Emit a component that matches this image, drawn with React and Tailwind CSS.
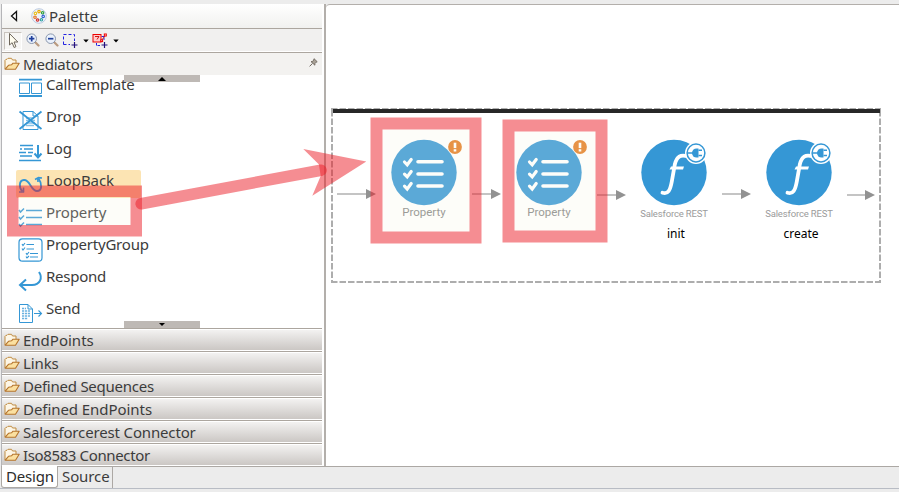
const BLUE = '#3597d5';

function Folder() {
  return (
    <svg width="16" height="14" viewBox="0 0 16 14" className="shrink-0">
      <path d="M1 12V3.3L2 2.3H3L4 1.3H7.5L8.5 3H12V6" fill="#fdf6e6" stroke="#c08d43" />
      <path d="M1.2 12.2L4.5 8.3L7.5 7.8L9 6.2H15.2L11.5 12.2Z" fill="#fbe0a0" stroke="#b5742c" strokeWidth="1.1" strokeLinejoin="round" />
    </svg>
  );
}

function PaletteHeader() {
  const dots = [
    [8, 3.6, '#e8a800'], [4.4, 5.4, '#e8c020'], [4, 9.2, '#e07020'], [6.6, 12, '#d03030'],
    [11.6, 4.8, '#30a040'], [12.2, 8.4, '#3060d0'], [10.4, 11.8, '#30a0a0'],
  ];
  return (
    <div className="flex h-6 w-[320px] items-center bg-linear-to-b from-white to-[#f1f1ef]">
      <svg width="10" height="12" viewBox="0 0 10 12" className="ml-[7px]">
        <path d="M7.5 1.5V10.5L2.5 6Z" fill="#fff" stroke="#111" strokeWidth="1.3" />
      </svg>
      <svg width="16" height="16" viewBox="0 0 16 16" className="ml-[12px] -mt-px">
        <circle cx="8" cy="8" r="7.3" fill="#eef3fb" stroke="#b6c5dc" strokeWidth=".9" />
        {dots.map(([x, y, c]) => (
          <circle key={c} cx={x} cy={y} r="1.2" fill="#fff" stroke={c} strokeWidth="1.2" />
        ))}
      </svg>
      <span className="ml-[2px]">Palette</span>
    </div>
  );
}

function Magnifier({ plus }) {
  return (
    <svg width="14" height="14" viewBox="0 0 14 14">
      <path d="M9 9L12.5 12.5" stroke="#b99a80" strokeWidth="2.2" strokeLinecap="round" />
      <circle cx="5.7" cy="5.7" r="4.8" fill="#eaf1fc" stroke="#8a97ad" />
      <path d={plus ? 'M3 5.7H8.4M5.7 3V8.4' : 'M3 5.7H8.4'} stroke="#1f3f9c" strokeWidth="1.7" />
    </svg>
  );
}

function Caret() {
  return (
    <svg width="6" height="4" viewBox="0 0 6 4">
      <path d="M.3 .5H5.7L3 3.5Z" fill="#000" />
    </svg>
  );
}

function Toolbar() {
  return (
    <div className="flex h-[23px] w-[320px] items-center border-t border-[#aca69f] bg-[#f1f0ef]">
      <div className="ml-[2px] mt-px flex h-[18px] w-[18px] items-center justify-center border border-[#c9c4be] border-r-white border-b-white bg-[#f7f6f4]">
        <svg width="14" height="17" viewBox="0 0 14 17" className="shrink-0">
          <path d="M3.5 1.5V13L6.1 10.7L8.1 15.5L9.9 14.7L8 10H11.8Z" fill="#fffdf0" stroke="#6f675c" />
        </svg>
      </div>
      <div className="ml-[4px] -mt-px"><Magnifier plus /></div>
      <div className="ml-[5px] -mt-px"><Magnifier /></div>
      <svg width="16" height="15" viewBox="0 0 16 15" className="ml-[3px]">
        <path d="M1.5 11.5V1.5H12.5V8M1.5 11.5H8" fill="none" stroke="#2222e0" strokeDasharray="3 2" />
        <path d="M12.5 9V15M9.5 12H15.5" stroke="#22107c" strokeWidth="1.2" />
      </svg>
      <div className="ml-[5px] mt-px"><Caret /></div>
      <svg width="16" height="15" viewBox="0 0 16 15" className="ml-[3px]">
        <path d="M4.5 10V12.5H8M9.5 3.5H12V8" fill="none" stroke="#2222e0" strokeDasharray="2.5 1" />
        <rect x="1" y="1.5" width="8" height="7.5" fill="#fcc" stroke="#e00" />
        <path d="M3 3.5H7L5 6.5M9 8L13 3" fill="none" stroke="#c00" strokeWidth=".9" />
        <rect x="12.3" y="1" width="2" height="2" fill="#fff" stroke="#e00" />
        <rect x="8.8" y="6.8" width="1.8" height="1.8" fill="#fff" stroke="#e00" />
        <path d="M12.5 9V15M9.5 12H15.5" stroke="#22107c" strokeWidth="1.2" />
      </svg>
      <div className="ml-[5px] mt-px"><Caret /></div>
    </div>
  );
}

const icons = {
  CallTemplate: (
    <>
      <path d="M1 1.7H24M1 18H24" strokeWidth="1.8" />
      <path d="M1.5 5H11.5V15.5H1.5ZM13.5 5H23.5V15.5H13.5Z" strokeWidth="1" />
    </>
  ),
  Drop: (
    <>
      <path d="M5 1.5H15L20 6V19.5H5ZM15 1.5V6H20" strokeWidth="1" />
      <path d="M8 8H16M8 10.5H17M8 13H17M8 15.5H16" strokeWidth="1.5" opacity=".6" />
      <path d="M1.5 1.5L23.5 19M23.5 1.5L1.5 19" strokeWidth="1.8" />
    </>
  ),
  Log: (
    <>
      <path d="M2 3.5H15M2 7H4M6 7H15M1 10.5H8M10 10.5H15M2 14H14M1 18.5H23" strokeWidth="1.3" />
      <path d="M20 3V15M16.5 11.5L20 15.5L23.5 11.5" strokeWidth="2" />
    </>
  ),
  LoopBack: (
    <>
      <path d="M4.5 17.5C1 14 .5 6.5 6 6C12 5.5 13 17 19 17C24 17 24.5 10 20.5 4.5" strokeWidth="1.9" />
      <path d="M17 5.5L20.5 3.6L24 4M19.8 4.5L20 8M1 18H6M5.5 13.5V18.5" strokeWidth="1.6" />
    </>
  ),
  Property: (
    <>
      <path d="M8 4.5H24M8 11.5H24M8 18.5H24" strokeWidth="1.4" />
      <path d="M1 4L2.5 6L6 2.5M1 11L2.5 13L6 9.5M1 18L2.5 20L6 16.5" strokeWidth="1.5" />
    </>
  ),
  PropertyGroup: (
    <>
      <rect x="1" y=".8" width="23" height="22.4" rx="3.5" strokeWidth="1.2" />
      <path d="M8.5 6.5H16M8.5 11H16M12 15.5H20M12 19H20" strokeWidth="1.2" />
      <path d="M4 6L5 7.5L7 5M4 10.5L5 12L7 9.5M8 15L9 16.5L11 14M8 18.5L9 20L11 18" strokeWidth="1.1" />
    </>
  ),
  Respond: <path d="M21 2C25 8 22 15 14 15H2M8 9.5L2 15L8 20.5" strokeWidth="2" />,
  Send: (
    <>
      <path d="M1.5 2.5H10L14.5 7V20.5H1.5ZM10 2.5V7H14.5" strokeWidth="1" />
      <path d="M4 6.5H8M4 9H12M4 11.5H12M4 14H12M4 16.5H10" strokeWidth="1.3" strokeDasharray="2.2 .8" opacity=".75" />
      <path d="M16 11.5H23.5M20.5 8.5L23.5 11.5L20.5 14.5" strokeWidth="1.1" />
    </>
  ),
};

const items = [
  ['CallTemplate', 'tracking-[-0.2px]'],
  ['Drop', 'tracking-[0px]'],
  ['Log', 'tracking-[-0.1px]'],
  ['LoopBack', 'tracking-[-0.08px]'],
  ['Property', 'tracking-[-0.1px]'],
  ['PropertyGroup', 'tracking-[-0.2px]'],
  ['Respond', 'tracking-[-0.25px]'],
  ['Send', 'tracking-[-0.2px]'],
];

function Items() {
  return (
    <div className="relative h-[253px] w-[320px] overflow-hidden bg-white">
      {items.map(([name, track]) => (
        <div key={name} className="h-8 first:-mt-px">
          <div className={`ml-[14px] flex h-[28px] w-[125px] rounded-[2px] ${name === 'LoopBack' ? 'bg-[#fce4b3]' : ''}`}>
            <svg width="26" height="24" viewBox="0 0 26 24" fill="none" stroke={BLUE} className="ml-[2px] mt-[4px] shrink-0">
              {icons[name]}
            </svg>
            <span className={`ml-[2px] h-[20px] whitespace-nowrap leading-[20px] ${track}`}>{name}</span>
          </div>
        </div>
      ))}
      <div className="absolute left-[122px] top-0 flex h-[7px] w-[76px] items-center justify-center bg-[#beb9b5]">
        <svg width="8" height="4" viewBox="0 0 8 4"><path d="M0 4H8L4 0Z" /></svg>
      </div>
      <div className="absolute bottom-0 left-[122px] flex h-[7px] w-[76px] items-center justify-center bg-[#beb9b5]">
        <svg width="6" height="3" viewBox="0 0 6 3"><path d="M0 0H6L3 3Z" /></svg>
      </div>
    </div>
  );
}

const drawers = [
  ['EndPoints', 'tracking-[0px]'],
  ['Links', 'tracking-[-0.1px]'],
  ['Defined Sequences', 'tracking-[-0.24px]'],
  ['Defined EndPoints', 'tracking-[-0.06px]'],
  ['Salesforcerest Connector', 'tracking-[-0.15px]'],
  ['Iso8583 Connector', 'tracking-[-0.37px]'],
];

function Palette() {
  return (
    <div className="flex h-[462px] w-[322px] flex-col bg-white">
      <PaletteHeader />
      <Toolbar />
      <div className="mt-px flex h-[23px] w-[320px] items-center border-t border-[#aca69f] bg-[#f3f2f0]">
        <div className="ml-[2px]"><Folder /></div>
        <span className="ml-[3px] tracking-[-0.2px]">Mediators</span>
        <svg width="9" height="9" viewBox="0 0 9 9" className="ml-auto mr-[4px] -mt-[3px]">
          <path d="M5 .7L8.2 3.7L7.2 4.2L5.9 5.6V7.2L2 3.6H3.4L4.7 2Z" fill="#a8a196" stroke="#6e675e" strokeWidth=".9" />
          <path d="M3.4 5.5L.6 8.4" stroke="#6e675e" />
        </svg>
      </div>
      <Items />
      {drawers.map(([name, track]) => (
        <div key={name} className="h-[23px] w-[320px] shrink-0 border-t border-[#aca69f]">
          <div className="mt-px flex h-[20px] items-center bg-linear-to-b from-[#f3f2f1] to-[#cbc7c4]">
            <div className="ml-[2px]"><Folder /></div>
            <span className={`-mt-px ml-[3px] whitespace-nowrap ${track}`}>{name}</span>
          </div>
        </div>
      ))}
    </div>
  );
}

function PropertyNode({ x }) {
  return (
    <g transform={`translate(${x} 172.5)`}>
      <circle r="32.7" fill={BLUE} />
      <path d="M-6 -10.7H18M-6 1.5H18M-6 13.5H18" stroke="#fff" strokeWidth="3.6" strokeLinecap="round" />
      <path d="M-19.5 -10.5L-16.8 -7.7L-12.8 -13M-19.5 1.6L-16.8 4.4L-12.8 -1M-19.5 13.7L-16.8 16.5L-12.8 11" fill="none" stroke="#fff" strokeWidth="3.2" strokeLinecap="round" />
      <circle cx="31" cy="-25.5" r="6.9" fill="#e47b20" />
      <rect x="29.7" y="-29.8" width="2.6" height="5.4" fill="#fff" />
      <rect x="29.7" y="-23.3" width="2.6" height="2.3" fill="#fff" />
    </g>
  );
}

function RestNode({ x }) {
  return (
    <g transform={`translate(${x} 172.5)`}>
      <circle r="32.7" fill={BLUE} />
      <path d="M-11.5 20.3C-6 22 -3.8 18 -2.2 9L.8 -8C2.6 -16 6.5 -18.5 14 -16" fill="none" stroke="#fff" strokeWidth="3.8" strokeLinecap="round" />
      <path d="M-4.5 -3H9L10 -6H-3" fill="#fff" />
      <circle cx="22" cy="-19.5" r="11" fill="#fff" />
      <circle cx="22" cy="-19.5" r="8.9" fill="none" stroke={BLUE} strokeWidth="1.5" />
      <path d="M13.5 -19.5H19M24.5 -22.3H28M24.5 -16.9H28" stroke={BLUE} strokeWidth="1.5" />
      <path d="M24.5 -24V-15H22.5A4.5 4.5 0 0 1 22.5 -24Z" fill={BLUE} />
    </g>
  );
}

function Flow() {
  const arrows = [[337, 366, 194], [472, 491, 194], [597, 616, 195], [722, 741, 194], [847, 865, 195]];
  return (
    <svg width="899" height="492" viewBox="0 0 899 492" className="absolute left-0 top-0">
      <path d="M331 109H881M332 110V282M331 282H881M880 110V282" fill="none" stroke="#adadad" strokeWidth="2" strokeDasharray="6.5 2" />
      <path d="M333 111H880" stroke="#272727" strokeWidth="4" />
      {arrows.map(([a, b, y]) => (
        <g key={a}>
          <path d={`M${a} ${y}H${b}`} stroke="#c4c4c4" strokeWidth="2" />
          <path d={`M${b} ${y - 5}V${y + 5}L${b + 10} ${y}Z`} fill="#929292" />
        </g>
      ))}
      <PropertyNode x={424} />
      <PropertyNode x={549} />
      <RestNode x={674} />
      <RestNode x={799} />
    </svg>
  );
}

function Labels() {
  const title = "absolute flex w-[100px] justify-center whitespace-nowrap font-['Roboto',sans-serif] leading-4";
  const name = 'absolute top-[226px] flex w-[60px] justify-center text-[12px] leading-4 text-black';
  return (
    <>
      <span className={`${title} left-[374px] top-[204px] text-[11.5px] text-[#868686]`}>Property</span>
      <span className={`${title} left-[499px] top-[204px] text-[11.5px] text-[#868686]`}>Property</span>
      <span className={`${title} left-[624px] top-[206px] text-[9.5px] tracking-[-0.15px] text-[#9b9b9b]`}>Salesforce REST</span>
      <span className={`${title} left-[749px] top-[206px] text-[9.5px] tracking-[-0.15px] text-[#9b9b9b]`}>Salesforce REST</span>
      <span className={`${name} left-[646px]`}>init</span>
      <span className={`${name} left-[771px]`}>create</span>
    </>
  );
}

function Annotations() {
  const frames = [
    [7, 185.5, 135, 51, 11.5],
    [370.5, 117.5, 111, 126, 12],
    [502.5, 119.5, 105, 123, 12],
  ];
  return (
    <svg width="899" height="492" viewBox="0 0 899 492" className="absolute left-0 top-0">
      {frames.map(([x, y, w, h, t]) => (
        <g key={x}>
          <rect x={x + t} y={y + t} width={w - 2 * t} height={h - 2 * t} fill="#f5f5e1" fillOpacity=".2" />
          <rect x={x + t / 2} y={y + t / 2} width={w - t} height={h - t} fill="none" stroke="#eb1b26" strokeOpacity=".5" strokeWidth={t} />
        </g>
      ))}
      <path d="M141.2 203.8L321 170.2" stroke="#eb1b26" strokeOpacity=".5" strokeWidth="11.6" strokeLinecap="round" />
      <path d="M303.3 149L366.3 161.4L312.3 195.8L320.7 176L319 164.5Z" fill="#eb1b26" fillOpacity=".5" />
    </svg>
  );
}

export default function App() {
  return (
    <div className="relative flex h-[492px] w-[899px] flex-col overflow-hidden bg-[#ececec] font-['Noto_Sans',sans-serif] text-[15px] leading-5 text-[#3c3c3c]">
      <div className="ml-px mt-[4px] flex h-[462px] border-l border-[#b5b5b8]">
        <Palette />
        <div className="w-[2px] bg-[#b3afab]" />
        <div className="h-[462px] flex-1 rounded-tl-[4px] border-t border-[#b3afab] bg-white" />
      </div>
      <div className="flex h-[23px] border-b border-[#b8bcc4]">
        <div className="ml-px flex h-[22px] w-[57px] rounded-b-[3px] border-r border-b border-l border-[#aca8a4] bg-white pl-[4px] text-[#2c2c2c]">
          <span className="whitespace-nowrap tracking-[-0.2px]">Design</span>
        </div>
        <div className="flex h-[22px] w-[55px] border-t border-r border-[#aca8a4] pl-[4px]">
          <span className="-mt-px whitespace-nowrap tracking-[-0.1px]">Source</span>
        </div>
        <div className="flex-1 border-t border-[#aca8a4]" />
      </div>
      <Flow />
      <Labels />
      <Annotations />
    </div>
  );
}
